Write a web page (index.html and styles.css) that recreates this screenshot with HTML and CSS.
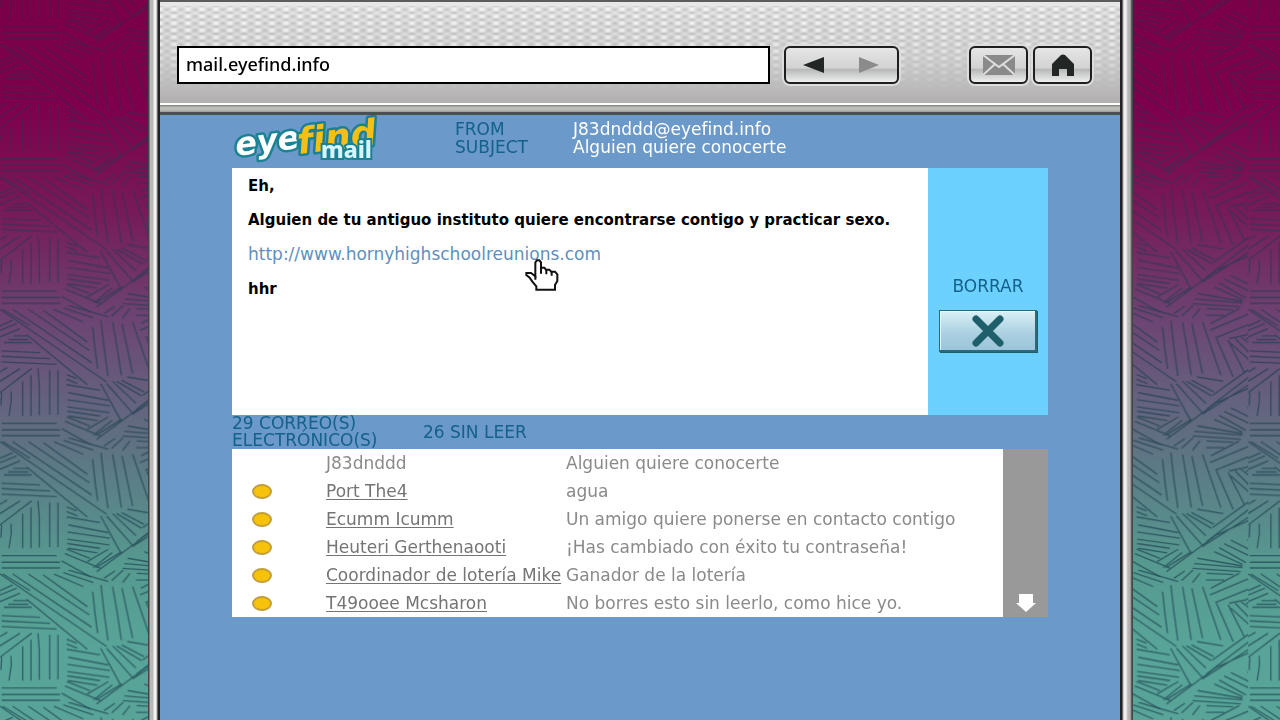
FILE: index.html
```html
<!DOCTYPE html>
<html lang="es">
<head>
    <meta charset="UTF-8">
    <meta name="viewport" content="width=device-width, initial-scale=1.0">
    <title>Eyefind Mail</title>
    <link rel="stylesheet" href="styles.css">
</head>
<body>

    <svg class="wallpaper" aria-hidden="true">
        <defs>
            <path id="hatch" class="hatch" d="M8 12L90 62M38 12L275 172M85 12L268 135M130 15L262 110M162 12L250 50M190 8L280 38M205 0L325 35M0 12L320 230M80 88L262 238
                M0 62L38 45M0 75L50 55M0 95L60 70M40 92L85 92M25 103L85 103M12 112L95 112M5 137L120 142M5 153L150 160M5 170L170 177
                M0 200L22 187M0 228L60 190M0 262L95 190M5 262L3 300M33 258L34 285L27 332M68 228L68 332M93 210L93 332M114 190L118 240L118 330M149 195L149 328M174 195L174 328
                M5 354L170 354M5 374L180 374M5 391L180 391
                M278 65L285 130L293 190M303 45L312 125L324 212M338 50L352 130L364 210M366 55L380 120L398 205M398 50L453 210
                M200 208L230 220M200 222L232 235M200 238L300 255M205 262L325 285M202 283L330 302M202 305L328 322M202 318L300 332M205 332L292 346M200 335L270 362M195 348L302 392M185 370L272 418
                M302 235L362 345M320 235L402 328M338 228L408 294M350 228L425 272M365 225L432 260M382 215L460 228M262 372L325 335M280 390L337 345M288 390L365 342M290 402L440 292
                M428 270L540 190M410 312L573 188M400 325L613 190M440 292L626 208M533 308L628 235M483 308L558 345M463 318L553 362M448 330L528 375M433 342L518 380M383 362L518 385M373 378L518 390M368 392L513 402
                M440 100L490 215M475 105L523 200M483 115L550 175M496 100L560 165M513 95L578 145M423 55L508 10M420 75L563 15M436 98L593 35M478 100L525 90M523 92L618 45M528 102L623 58M536 115L623 75
                M408 30L463 30M410 10L490 14M312 25L345 3M335 32L370 0M368 38L390 10"/>
            <pattern id="weave" x="0" y="122" width="535" height="397" patternUnits="userSpaceOnUse" patternTransform="scale(0.3333)">
                <use href="#hatch"/>
                <use href="#hatch" y="-397"/>
            </pattern>
        </defs>
        <rect width="100%" height="100%" fill="url(#weave)"/>
    </svg>

    <div class="browser">
        <div class="toolbar">
            <input type="text" class="address" aria-label="Dirección" value="mail.eyefind.info">
            <div class="nav_btns">
                <button class="nav_btn" aria-label="Atrás">
                    <svg width="22" height="18" viewBox="0 0 22 18"><path d="M0 9L21 1V17Z" fill="#222625"/></svg>
                </button>
                <button class="nav_btn" aria-label="Adelante" disabled>
                    <svg width="22" height="18" viewBox="0 0 22 18"><path d="M21 9L1 1V17Z" fill="#8b8b8b"/></svg>
                </button>
            </div>
            <div class="tool_btns">
                <button class="tool_btn" aria-label="Correo">
                    <svg width="32" height="20" viewBox="0 0 32 20">
                        <rect width="32" height="20" fill="#8a8a8a"/>
                        <path d="M0 0L16 12L32 0M0 20L12 9M32 20L20 9" fill="none" stroke="#dedede" stroke-width="2"/>
                    </svg>
                </button>
                <button class="tool_btn" aria-label="Inicio">
                    <svg width="24" height="22" viewBox="0 0 24 22">
                        <path d="M1 22V10L10 1Q12 0 14 1L23 10V22H16V15H8V22Z" fill="#222625"/>
                    </svg>
                </button>
            </div>
        </div>

        <main class="mail">
            <header class="mail_header">
                <svg class="logo" width="150" height="53" viewBox="0 0 150 53" role="img" aria-label="eyefind mail">
                    <g transform="rotate(-7 75 25)">
                        <text class="logo_word logo_eye" x="3" y="32">eye</text>
                        <text class="logo_word logo_find" x="65" y="38">find</text>
                    </g>
                    <text class="logo_mail" x="89" y="43">mail</text>
                </svg>
                <dl class="mail_info">
                    <dt>FROM</dt>
                    <dd>J83dnddd@eyefind.info</dd>
                    <dt>SUBJECT</dt>
                    <dd>Alguien quiere conocerte</dd>
                </dl>
            </header>

            <section class="message">
                <div class="message_body">
                    <p>Eh,</p>
                    <p>Alguien de tu antiguo instituto quiere encontrarse contigo y practicar sexo.</p>
                    <p><a class="message_link" href="#">http://www.hornyhighschoolreunions.com</a></p>
                    <p>hhr</p>
                    <svg class="cursor" width="36" height="32" viewBox="0 0 108 96" aria-hidden="true">
                        <path d="M31 52V10L36 4H43L48 10V26H58L63 32H73L79 38H90L97 46V66L90 78V92H34V82L22 68L14 56L4 48V42H18L31 52Z" fill="#fff" stroke="#111" stroke-width="6"/>
                        <path d="M31 50V62M48 24V44M64 30V46M80 36V50" fill="none" stroke="#111" stroke-width="6"/>
                    </svg>
                </div>
                <aside class="message_actions">
                    <label for="deleteBtn">BORRAR</label>
                    <button class="delete_btn" id="deleteBtn">
                        <svg width="36" height="34" viewBox="0 0 36 34"><path d="M6 5L30 29M30 5L6 29" stroke="#1f5f6c" stroke-width="7" stroke-linecap="round"/></svg>
                    </button>
                </aside>
            </section>

            <div class="counters">
                <p class="total">29 CORREO(S) ELECTRÓNICO(S)</p>
                <p>26 SIN LEER</p>
            </div>

            <section class="inbox">
                <table class="mail_list">
                    <tr>
                        <td class="state"></td>
                        <td class="sender">J83dnddd</td>
                        <td>Alguien quiere conocerte</td>
                    </tr>
                    <tr>
                        <td class="state"><span class="unread"></span></td>
                        <td class="sender"><a href="#">Port The4</a></td>
                        <td>agua</td>
                    </tr>
                    <tr>
                        <td class="state"><span class="unread"></span></td>
                        <td class="sender"><a href="#">Ecumm Icumm</a></td>
                        <td>Un amigo quiere ponerse en contacto contigo</td>
                    </tr>
                    <tr>
                        <td class="state"><span class="unread"></span></td>
                        <td class="sender"><a href="#">Heuteri Gerthenaooti</a></td>
                        <td>¡Has cambiado con éxito tu contraseña!</td>
                    </tr>
                    <tr>
                        <td class="state"><span class="unread"></span></td>
                        <td class="sender"><a href="#">Coordinador de lotería Mike</a></td>
                        <td>Ganador de la lotería</td>
                    </tr>
                    <tr>
                        <td class="state"><span class="unread"></span></td>
                        <td class="sender"><a href="#">T49ooee Mcsharon</a></td>
                        <td>No borres esto sin leerlo, como hice yo.</td>
                    </tr>
                </table>
                <div class="scroller">
                    <button class="scroll_btn" aria-label="Bajar">
                        <svg width="20" height="18" viewBox="0 0 20 18"><path d="M3 0H17V9H20L10 18L0 9H3Z" fill="#fff"/></svg>
                    </button>
                </div>
            </section>
        </main>
    </div>

</body>
</html>
```
FILE: styles.css
```css
*{
    box-sizing: border-box;
}
p, dl, dd{
    margin: 0;
    padding: 0;
}
button{
    padding: 0;
    border: 0;
    background: none;
    display: flex;
    align-items: center;
    justify-content: center;
}

body{
    margin: 0;
    min-height: 100vh;
    display: flex;
    font-family: "DejaVu Sans", Verdana, sans-serif;
    font-size: 17px;
    line-height: 18px;
    background: linear-gradient(#7a0048, #7e004c 15%, #761c5a 30%, #6c4674 45%, #65607c 55%, #5c7a86 65%, #56998f 78%, #58a498 90%);
}

.wallpaper{
    position: fixed;
    top: 0;
    left: 0;
    width: 100%;
    height: 100%;
    z-index: -1;
    -webkit-mask-image: linear-gradient(rgba(0, 0, 0, 0.5), #000 50%);
    mask-image: linear-gradient(rgba(0, 0, 0, 0.5), #000 50%);
}
.hatch{
    fill: none;
    stroke: rgba(25, 60, 75, 0.65);
    stroke-width: 4px;
}

/* window frame, the rails are the two side gradients */
.browser{
    flex: 1;
    display: flex;
    flex-direction: column;
    margin: 0 147px 0 148px;
    padding: 0 13px 0 12px;
    background:
        linear-gradient(90deg, #444 1px, #b9b9b9 2px 5px, #f2f2f2 6px 8px, #aaa 9px, #222 10px 12px) left / 12px 100% no-repeat,
        linear-gradient(90deg, #222 2px, #aaa 3px, #f2eeee 4px 6px, #b5b5b5 8px 10px, #444 12px 13px) right / 13px 100% no-repeat;
}

.toolbar{
    position: relative;
    height: 115px;
    display: flex;
    align-items: flex-start;
    padding: 44px 28px 0 17px;
    border-top: 2px solid #5c5c5c;
    background: linear-gradient(#e8e8e8, #d2d2d2 55px, #b3b1b2 98px, #b3b1b2 101px, #fff 101px 103px, #8c8c88 103px 104px, #bcbcb8 105px 108px, #9a9a96 110px, #4a504e 110px 113px);
}
.toolbar::before{
    content: "";
    position: absolute;
    inset: 4px 0 16px;
    background:
        radial-gradient(ellipse 6px 3px, rgba(135, 135, 135, 0.35), transparent) 0 0 / 14px 7px,
        radial-gradient(ellipse 6px 3px, rgba(255, 255, 255, 0.7), transparent) 7px 0 / 14px 7px,
        radial-gradient(ellipse 6px 3px, rgba(135, 135, 135, 0.35), transparent) 7px 3px / 14px 7px;
    -webkit-mask-image: linear-gradient(#000 30%, transparent 90%);
    mask-image: linear-gradient(#000 30%, transparent 90%);
}
.toolbar > *{
    position: relative;
}

.address{
    flex: 1;
    height: 38px;
    border: 2px solid #000;
    border-radius: 0;
    padding: 0 7px 2px;
    background-color: #fff;
    color: #000;
    font-family: "Noto Sans", "DejaVu Sans", sans-serif;
    font-weight: 500;
    font-size: 18px;
    outline: none;
}

.nav_btns, .tool_btn{
    height: 38px;
    border: 2px solid #1e1e1e;
    border-radius: 6px;
    background: linear-gradient(#e6e6e6, #d2d2d2 60%, #b4b6b6 61%, #eee);
    box-shadow: 0 0 0 2px #dcdcdc;
}
.nav_btns{
    display: flex;
    width: 115px;
    margin: 0 70px 0 14px;
}
.nav_btn{
    flex: 1;
}
.tool_btns{
    display: flex;
    gap: 5px;
}
.tool_btn{
    width: 59px;
}

.mail{
    flex: 1;
    padding: 0 72px;
    background-color: #6b99c9;
}

.mail_header{
    display: flex;
    height: 53px;
}
.logo{
    margin-right: 73px;
    overflow: visible;
}
.logo_word{
    font-weight: bold;
    font-style: italic;
    font-size: 32px;
    stroke: #1a8292;
    stroke-width: 5px;
    stroke-linejoin: round;
    paint-order: stroke;
}
.logo_eye{
    fill: #fff;
}
.logo_find{
    fill: #f6bf16;
    font-size: 36px;
}
.logo_mail{
    font-family: "Noto Sans", sans-serif;
    font-weight: 800;
    font-size: 23px;
    fill: #d6f4ff;
    stroke: #1a8292;
    stroke-width: 4px;
    paint-order: stroke;
}

.mail_info{
    display: grid;
    grid-template-columns: 118px 1fr;
    grid-auto-rows: 18px;
    padding-top: 5px;
    color: #fff;
}
.mail_info dt, .counters, .message_actions{
    color: #14618a;
}

.message{
    display: flex;
    min-height: 247px;
}
.message_body{
    position: relative;
    flex: 1;
    display: flex;
    flex-direction: column;
    gap: 16px;
    padding: 9px 16px;
    background-color: #fff;
    color: #000;
    font-size: 15px;
    font-weight: bold;
}
.message_link{
    color: #5f8fbe;
    font-size: 17px;
    font-weight: normal;
    text-decoration: none;
}
.cursor{
    position: absolute;
    left: 293px;
    top: 91px;
}
.message_actions{
    width: 120px;
    padding-top: 109px;
    display: flex;
    flex-direction: column;
    align-items: center;
    gap: 15px;
    background-color: #6dd1ff;
}
.delete_btn{
    width: 98px;
    height: 42px;
    border: 2px solid #2a6a7c;
    border-width: 1px 2px 2px 1px;
    background: linear-gradient(#d9f0f6, #a9cfe0 60%, #9cc4da);
    box-shadow: inset 1px 1px #eefaff, 1px 1px #1f5f6c;
}

.counters{
    display: flex;
    align-items: center;
    height: 34px;
    line-height: 17px;
}
.total{
    width: 191px;
}

.inbox{
    display: flex;
    background-color: #fff;
}
.mail_list{
    flex: 1;
    border-collapse: collapse;
    table-layout: fixed;
    color: #8a8a8a;
}
.mail_list td{
    height: 28px;
    padding: 0;
    white-space: nowrap;
}
.mail_list .state{
    width: 94px;
    padding-left: 20px;
}
.mail_list .sender{
    width: 240px;
}
.mail_list a{
    color: #747474;
    text-decoration-thickness: 1px;
    text-underline-offset: 2px;
}
.unread{
    display: block;
    width: 20px;
    height: 15px;
    border: 2px solid #c39f3a;
    border-radius: 50%;
    background-color: #f6c20a;
}
.scroller{
    width: 45px;
    display: flex;
    align-items: flex-end;
    justify-content: center;
    padding-bottom: 5px;
    background-color: #999;
}
```
